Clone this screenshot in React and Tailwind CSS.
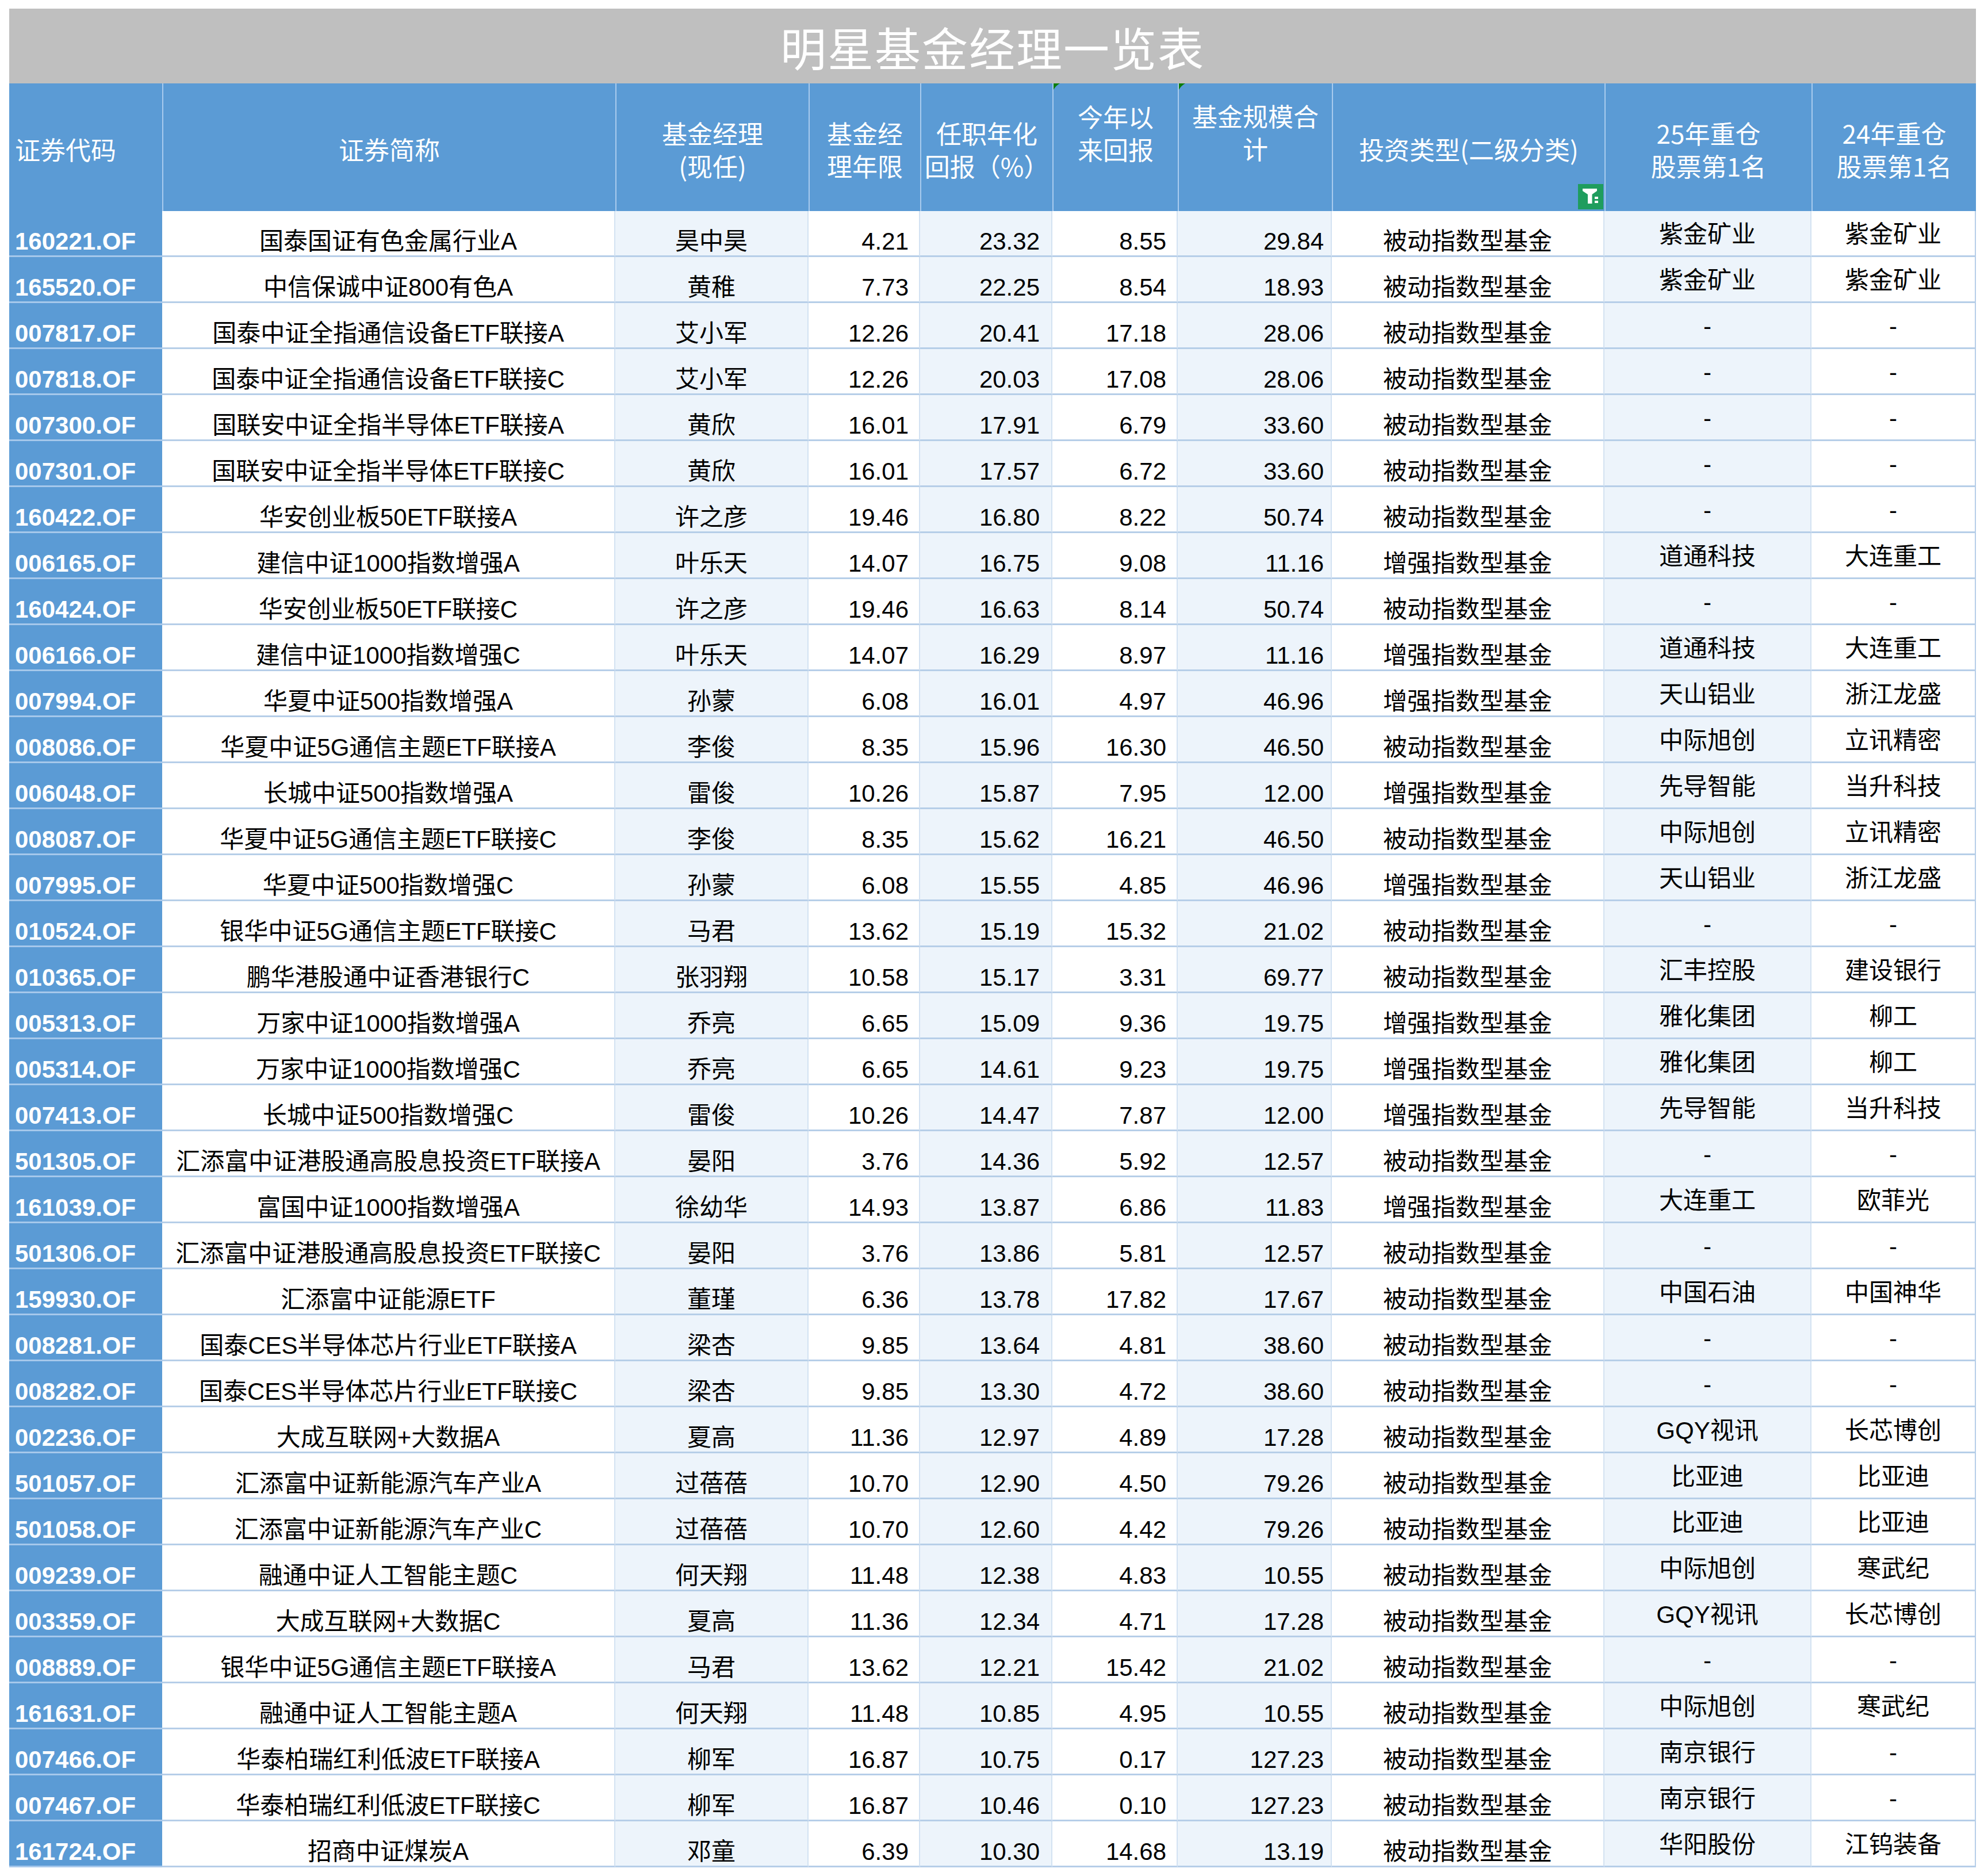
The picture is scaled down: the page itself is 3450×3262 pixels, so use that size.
import React from "react";

const ROWS = [
  ["160221.OF", "国泰国证有色金属行业A", "昊中昊", "4.21", "23.32", "8.55", "29.84", "被动指数型基金", "紫金矿业", "紫金矿业"],
  ["165520.OF", "中信保诚中证800有色A", "黄稚", "7.73", "22.25", "8.54", "18.93", "被动指数型基金", "紫金矿业", "紫金矿业"],
  ["007817.OF", "国泰中证全指通信设备ETF联接A", "艾小军", "12.26", "20.41", "17.18", "28.06", "被动指数型基金", "-", "-"],
  ["007818.OF", "国泰中证全指通信设备ETF联接C", "艾小军", "12.26", "20.03", "17.08", "28.06", "被动指数型基金", "-", "-"],
  ["007300.OF", "国联安中证全指半导体ETF联接A", "黄欣", "16.01", "17.91", "6.79", "33.60", "被动指数型基金", "-", "-"],
  ["007301.OF", "国联安中证全指半导体ETF联接C", "黄欣", "16.01", "17.57", "6.72", "33.60", "被动指数型基金", "-", "-"],
  ["160422.OF", "华安创业板50ETF联接A", "许之彦", "19.46", "16.80", "8.22", "50.74", "被动指数型基金", "-", "-"],
  ["006165.OF", "建信中证1000指数增强A", "叶乐天", "14.07", "16.75", "9.08", "11.16", "增强指数型基金", "道通科技", "大连重工"],
  ["160424.OF", "华安创业板50ETF联接C", "许之彦", "19.46", "16.63", "8.14", "50.74", "被动指数型基金", "-", "-"],
  ["006166.OF", "建信中证1000指数增强C", "叶乐天", "14.07", "16.29", "8.97", "11.16", "增强指数型基金", "道通科技", "大连重工"],
  ["007994.OF", "华夏中证500指数增强A", "孙蒙", "6.08", "16.01", "4.97", "46.96", "增强指数型基金", "天山铝业", "浙江龙盛"],
  ["008086.OF", "华夏中证5G通信主题ETF联接A", "李俊", "8.35", "15.96", "16.30", "46.50", "被动指数型基金", "中际旭创", "立讯精密"],
  ["006048.OF", "长城中证500指数增强A", "雷俊", "10.26", "15.87", "7.95", "12.00", "增强指数型基金", "先导智能", "当升科技"],
  ["008087.OF", "华夏中证5G通信主题ETF联接C", "李俊", "8.35", "15.62", "16.21", "46.50", "被动指数型基金", "中际旭创", "立讯精密"],
  ["007995.OF", "华夏中证500指数增强C", "孙蒙", "6.08", "15.55", "4.85", "46.96", "增强指数型基金", "天山铝业", "浙江龙盛"],
  ["010524.OF", "银华中证5G通信主题ETF联接C", "马君", "13.62", "15.19", "15.32", "21.02", "被动指数型基金", "-", "-"],
  ["010365.OF", "鹏华港股通中证香港银行C", "张羽翔", "10.58", "15.17", "3.31", "69.77", "被动指数型基金", "汇丰控股", "建设银行"],
  ["005313.OF", "万家中证1000指数增强A", "乔亮", "6.65", "15.09", "9.36", "19.75", "增强指数型基金", "雅化集团", "柳工"],
  ["005314.OF", "万家中证1000指数增强C", "乔亮", "6.65", "14.61", "9.23", "19.75", "增强指数型基金", "雅化集团", "柳工"],
  ["007413.OF", "长城中证500指数增强C", "雷俊", "10.26", "14.47", "7.87", "12.00", "增强指数型基金", "先导智能", "当升科技"],
  ["501305.OF", "汇添富中证港股通高股息投资ETF联接A", "晏阳", "3.76", "14.36", "5.92", "12.57", "被动指数型基金", "-", "-"],
  ["161039.OF", "富国中证1000指数增强A", "徐幼华", "14.93", "13.87", "6.86", "11.83", "增强指数型基金", "大连重工", "欧菲光"],
  ["501306.OF", "汇添富中证港股通高股息投资ETF联接C", "晏阳", "3.76", "13.86", "5.81", "12.57", "被动指数型基金", "-", "-"],
  ["159930.OF", "汇添富中证能源ETF", "董瑾", "6.36", "13.78", "17.82", "17.67", "被动指数型基金", "中国石油", "中国神华"],
  ["008281.OF", "国泰CES半导体芯片行业ETF联接A", "梁杏", "9.85", "13.64", "4.81", "38.60", "被动指数型基金", "-", "-"],
  ["008282.OF", "国泰CES半导体芯片行业ETF联接C", "梁杏", "9.85", "13.30", "4.72", "38.60", "被动指数型基金", "-", "-"],
  ["002236.OF", "大成互联网+大数据A", "夏高", "11.36", "12.97", "4.89", "17.28", "被动指数型基金", "GQY视讯", "长芯博创"],
  ["501057.OF", "汇添富中证新能源汽车产业A", "过蓓蓓", "10.70", "12.90", "4.50", "79.26", "被动指数型基金", "比亚迪", "比亚迪"],
  ["501058.OF", "汇添富中证新能源汽车产业C", "过蓓蓓", "10.70", "12.60", "4.42", "79.26", "被动指数型基金", "比亚迪", "比亚迪"],
  ["009239.OF", "融通中证人工智能主题C", "何天翔", "11.48", "12.38", "4.83", "10.55", "被动指数型基金", "中际旭创", "寒武纪"],
  ["003359.OF", "大成互联网+大数据C", "夏高", "11.36", "12.34", "4.71", "17.28", "被动指数型基金", "GQY视讯", "长芯博创"],
  ["008889.OF", "银华中证5G通信主题ETF联接A", "马君", "13.62", "12.21", "15.42", "21.02", "被动指数型基金", "-", "-"],
  ["161631.OF", "融通中证人工智能主题A", "何天翔", "11.48", "10.85", "4.95", "10.55", "被动指数型基金", "中际旭创", "寒武纪"],
  ["007466.OF", "华泰柏瑞红利低波ETF联接A", "柳军", "16.87", "10.75", "0.17", "127.23", "被动指数型基金", "南京银行", "-"],
  ["007467.OF", "华泰柏瑞红利低波ETF联接C", "柳军", "16.87", "10.46", "0.10", "127.23", "被动指数型基金", "南京银行", "-"],
  ["161724.OF", "招商中证煤炭A", "邓童", "6.39", "10.30", "14.68", "13.19", "被动指数型基金", "华阳股份", "江钨装备"],
];

// per-column cell styling (data rows)
const CELL = [
  "bg-[#5B9BD5] text-white font-bold justify-start items-end pl-[10px] pb-[3px] border-b-[#A6C8EB]",
  "bg-white justify-center items-end pb-[3px] border-r-2 border-b-[#B6CEE8] border-r-[#D3E2F2]",
  "bg-[#EDF4FB] justify-center items-end pb-[3px] border-r-2 border-b-[#B6CEE8] border-r-[#D3E2F2]",
  "bg-white justify-end items-end pr-[18px] pb-[3px] border-r-2 border-b-[#B6CEE8] border-r-[#D3E2F2]",
  "bg-[#EDF4FB] justify-end items-end pr-[20px] pb-[3px] border-r-2 border-b-[#B6CEE8] border-r-[#D3E2F2]",
  "bg-white justify-end items-end pr-[18px] pb-[3px] border-r-2 border-b-[#B6CEE8] border-r-[#D3E2F2]",
  "bg-[#EDF4FB] justify-end items-end pr-[12px] pb-[3px] border-r-2 border-b-[#B6CEE8] border-r-[#D3E2F2]",
  "bg-white justify-center items-end pb-[3px] border-r-2 border-b-[#B6CEE8] border-r-[#D3E2F2]",
  "bg-[#EDF4FB] justify-center items-center pt-[4px] border-r-2 border-b-[#B6CEE8] border-r-[#D3E2F2]",
  "bg-white justify-center items-center pt-[4px] border-r-2 border-b-[#B6CEE8] border-r-[#B6CEE8]",
];

const HEAD = [
  { text: ["证券代码"], cls: "justify-start pl-[10px] pt-[6px]" },
  { text: ["证券简称"], cls: "justify-center pt-[6px]" },
  { text: ["基金经理", "(现任)"], cls: "justify-center pt-[6px]" },
  { text: ["基金经", "理年限"], cls: "justify-center pt-[6px]" },
  { text: ["任职年化", "回报（%）"], cls: "justify-center pt-[6px]" },
  { text: ["今年以", "来回报"], cls: "justify-center pb-[52px]", flag: true },
  { text: ["基金规模合", "计"], cls: "justify-center pb-[54px]", flag: true },
  { text: ["投资类型(二级分类)"], cls: "justify-center pt-[6px]", filter: true },
  { text: ["25年重仓", "股票第1名"], cls: "justify-center pt-[6px]" },
  { text: ["24年重仓", "股票第1名"], cls: "justify-center pt-[6px]" },
];

const CornerFlag = () => (
  <svg className="absolute left-0 top-0" width="11" height="11" viewBox="0 0 11 11">
    <path d="M0 0 H11 Q4 4 0 11 Z" fill="#0B7D0B" />
  </svg>
);

const FilterButton = () => (
  <svg className="absolute right-[2px] bottom-[3px]" width="44" height="44" viewBox="0 0 44 44">
    <rect width="44" height="44" fill="#1F9D5E" />
    <path d="M8 8 H33 V12 L24.5 18 V34 H17 V18 L8 12 Z" fill="#fff" />
    <rect x="29" y="22" width="6" height="4" fill="#fff" />
    <rect x="29" y="29" width="6" height="4" fill="#fff" />
  </svg>
);

const GRID = "grid grid-cols-[266px_788px_336px_194px_230px_218px_268px_474px_360px_286px]";

export default function App() {
  return (
    <div className="w-[3450px] h-[3262px] bg-white pt-[15px] pl-[16px] font-['Liberation_Sans','Noto_Sans_CJK_SC',sans-serif]">
      <div className="w-[3420px]">
        <div className="h-[130px] bg-[#BFBFBF] flex items-center justify-center text-white text-[80px] leading-none font-['Noto_Sans_CJK_SC',sans-serif] tracking-[2px]">
          明星基金经理一览表
        </div>

        <div className={`${GRID} h-[222px] bg-[#5B9BD5]`}>
          {HEAD.map((h, i) => (
            <div
              key={i}
              className={`relative flex items-center text-center text-white text-[44px] leading-[57px] font-['Noto_Sans_CJK_SC',sans-serif] ${i > 0 ? "border-l-2 border-l-[#A9CBEE]" : ""} ${h.cls}`}
            >
              {h.flag && <CornerFlag />}
              <div className="flex flex-col gap-[1px]">
                {h.text.map((t, k) => (
                  <div key={k} className="h-[56px] leading-[56px]">{t}</div>
                ))}
              </div>
              {h.filter && <FilterButton />}
            </div>
          ))}
        </div>

        {ROWS.map((r, ri) => (
          <div key={ri} className={`${GRID} h-[80px]`}>
            {r.map((v, ci) => (
              <div key={ci} className={`flex border-b-[3px] text-[42px] leading-[42px] whitespace-nowrap ${ci === 0 ? "" : "text-black"} ${CELL[ci]}`}>
                {v}
              </div>
            ))}
          </div>
        ))}
      </div>
    </div>
  );
}
